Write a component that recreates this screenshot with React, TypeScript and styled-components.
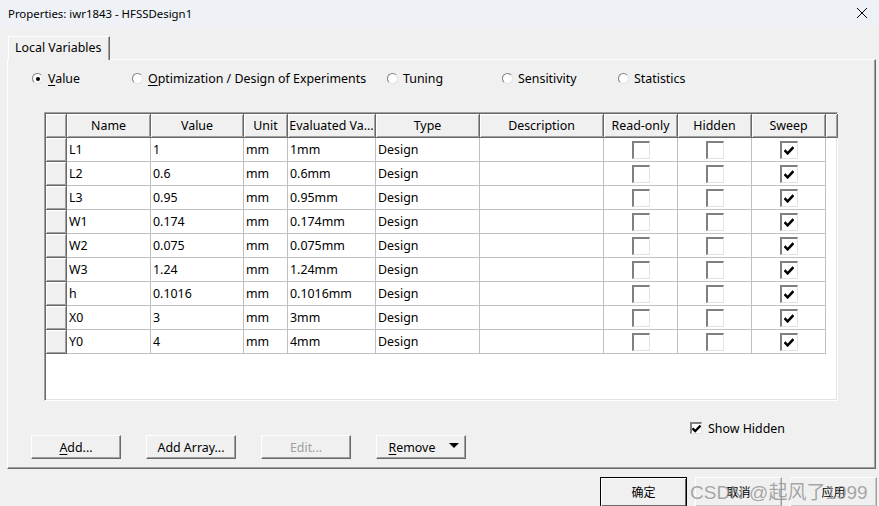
import styled, { createGlobalStyle } from 'styled-components';

const GlobalStyle = createGlobalStyle`
  html, body { margin: 0; padding: 0; background: #f0f0f0; }
  body { font-family: "Noto Sans", "Noto Sans CJK SC", sans-serif; font-size: 12.4px; color: #000; }
`;

const Window = styled.div`
  width: 879px;
  height: 506px;
  overflow: hidden;
  position: relative;
  background: #f0f0f0;
  display: flex;
  flex-direction: column;
`;

const TitleBar = styled.div`
  height: 26px;
  flex: none;
  background: #eef2f7;
  display: flex;
  align-items: center;
  justify-content: space-between;
  padding: 0 8px;
  box-sizing: border-box;
  font-size: 11.4px;
`;

const CloseIcon = styled.svg`
  width: 12px;
  height: 12px;
  margin-right: 3px;
`;

const TabStrip = styled.div`
  display: flex;
  padding: 10px 0 0 8px;
  height: 24px;
  flex: none;
  position: relative;
  z-index: 1;
`;

const Tab = styled.div`
  width: 102px;
  height: 24px;
  box-sizing: border-box;
  padding: 0 0 3px 6px;
  display: flex;
  align-items: center;
  background: #f0f0f0;
  border-top: 1px solid #fff;
  border-left: 1px solid #fff;
  border-right: 1px solid #696969;
  box-shadow: inset -1px 0 0 #a0a0a0;
`;

const Panel = styled.div`
  margin: -1px 0 0 7px;
  width: 869px;
  height: 410px;
  flex: none;
  box-sizing: border-box;
  border-top: 1px solid #fff;
  border-left: 1px solid #fff;
  border-right: 1px solid #696969;
  border-bottom: 1px solid #696969;
  box-shadow: inset -1px -1px 0 #a0a0a0;
  padding-top: 10px;
  display: flex;
  flex-direction: column;
`;

const RadioRow = styled.div`
  display: grid;
  grid-template-columns: 100px 255px 115px 116px auto;
  padding-left: 24px;
  height: 14px;
  align-items: center;
`;

const RadioItem = styled.label`
  display: flex;
  align-items: center;
  gap: 5px;
  white-space: nowrap;
`;

const RadioCircle = styled.span<{ $on?: boolean }>`
  width: 11px;
  height: 11px;
  box-sizing: border-box;
  border-radius: 50%;
  background: #fff;
  border: 1px solid;
  border-color: #808080 #e3e3e3 #e3e3e3 #808080;
  display: flex;
  align-items: center;
  justify-content: center;
  &::after {
    content: '';
    width: 4px;
    height: 4px;
    border-radius: 50%;
    background: ${({ $on }) => ($on ? '#000' : 'transparent')};
  }
`;

const Key = styled.span`
  text-decoration: underline;
  text-underline-offset: 2px;
`;

const GridBox = styled.div`
  margin: 28px 0 0 36px;
  width: 794px;
  height: 289px;
  box-sizing: border-box;
  background: #fff;
  border-top: 1px solid #a0a0a0;
  border-left: 1px solid #a0a0a0;
  border-right: 1px solid #fff;
  border-bottom: 1px solid #fff;
  box-shadow: inset 1px 1px 0 #696969, inset -1px -1px 0 #e3e3e3;
  padding: 1px;
`;

const cols = '21px 84px 93px 44px 88px 104px 124px 74px 74px 74px 12px';

const Row = styled.div`
  display: grid;
  grid-template-columns: ${cols};
  height: 24px;
`;

const HeadCell = styled.div`
  background: #f0f0f0;
  box-sizing: border-box;
  border-right: 1px solid #696969;
  border-bottom: 1px solid #696969;
  box-shadow: inset 1px 1px 0 #fff, inset -1px -1px 0 #a0a0a0;
  display: flex;
  align-items: center;
  justify-content: center;
  white-space: nowrap;
  overflow: hidden;
`;

const Cell = styled.div<{ $center?: boolean }>`
  box-sizing: border-box;
  border-right: 1px solid #c0c0c0;
  border-bottom: 1px solid #c0c0c0;
  display: flex;
  align-items: center;
  justify-content: ${({ $center }) => ($center ? 'center' : 'flex-start')};
  padding-left: ${({ $center }) => ($center ? '0' : '2px')};
  white-space: nowrap;
`;

const Check = styled.span<{ $size: number }>`
  width: ${({ $size }) => $size}px;
  height: ${({ $size }) => $size}px;
  flex: none;
  box-sizing: border-box;
  background: #fff;
  border-top: 2px solid #808080;
  border-left: 2px solid #808080;
  border-right: 1px solid #e3e3e3;
  border-bottom: 1px solid #e3e3e3;
  display: flex;
  align-items: center;
  justify-content: center;
`;

const CheckMark = styled.svg`
  width: 10px;
  height: 9px;
`;

const BottomArea = styled.div`
  display: flex;
  flex-direction: column;
`;

const ShowHiddenRow = styled.label`
  margin: 21px 0 0 682px;
  height: 12px;
  display: flex;
  align-items: center;
  gap: 6px;
`;

const ButtonRow = styled.div`
  display: flex;
  gap: 25px;
  padding-left: 23px;
  margin-top: 1px;
`;

const Button = styled.button<{ $disabled?: boolean; $menu?: boolean }>`
  width: 90px;
  height: 24px;
  padding: 0 ${({ $menu }) => ($menu ? '18px' : '0')} 0 0;
  box-sizing: border-box;
  font: inherit;
  color: ${({ $disabled }) => ($disabled ? '#a0a0a0' : '#000')};
  background: #f0f0f0;
  border: 1px solid;
  border-color: #fff #696969 #696969 #fff;
  box-shadow: inset -1px -1px 0 #a0a0a0;
  display: flex;
  align-items: center;
  justify-content: center;
  position: relative;
`;

const DropArrow = styled.span`
  position: absolute;
  right: 6px;
  top: 7px;
  width: 0;
  height: 0;
  border-left: 5px solid transparent;
  border-right: 5px solid transparent;
  border-top: 5px solid #000;
`;

const Footer = styled.div`
  display: flex;
  justify-content: flex-end;
  gap: 8px;
  padding-right: 2px;
  margin-top: 8px;
`;

const FooterButton = styled.button<{ $default?: boolean }>`
  width: 87px;
  height: 30px;
  flex: none;
  padding: 0;
  font: inherit;
  font-size: 12px;
  background: #f0f0f0;
  box-sizing: border-box;
  border: 1px solid;
  border-color: ${({ $default }) => ($default ? '#000' : '#fff #a0a0a0 #a0a0a0 #fff')};
  box-shadow: ${({ $default }) =>
    $default ? 'inset 1px 1px 0 #fff, inset -1px -1px 0 #696969' : 'inset -1px -1px 0 #c8c8c8'};
`;

const Watermark = styled.div`
  position: absolute;
  left: 690px;
  top: 477px;
  font-family: "Liberation Sans", "Noto Sans CJK SC", sans-serif;
  font-size: 19px;
  color: rgba(140, 140, 140, 0.75);
  white-space: nowrap;
  pointer-events: none;
`;

const headers = ['Name', 'Value', 'Unit', 'Evaluated Va...', 'Type', 'Description', 'Read-only', 'Hidden', 'Sweep'];

const variables = [
  ['L1', '1', '1mm'],
  ['L2', '0.6', '0.6mm'],
  ['L3', '0.95', '0.95mm'],
  ['W1', '0.174', '0.174mm'],
  ['W2', '0.075', '0.075mm'],
  ['W3', '1.24', '1.24mm'],
  ['h', '0.1016', '0.1016mm'],
  ['X0', '3', '3mm'],
  ['Y0', '4', '4mm'],
];

function CheckBox({ checked, size }: { checked?: boolean; size: number }) {
  return (
    <Check $size={size}>
      {checked && (
        <CheckMark viewBox="0 0 10 9">
          <path d="M0.5 4.2 L3.6 7.3 L9.5 1.2" fill="none" stroke="#000" strokeWidth="2.6" />
        </CheckMark>
      )}
    </Check>
  );
}

export default function App() {
  return (
    <>
      <GlobalStyle />
      <Window>
        <TitleBar>
          <span>Properties: iwr1843 - HFSSDesign1</span>
          <CloseIcon viewBox="0 0 12 12">
            <path d="M1 1 L11 11 M11 1 L1 11" stroke="#000" strokeWidth="1" />
          </CloseIcon>
        </TitleBar>

        <TabStrip>
          <Tab>Local Variables</Tab>
        </TabStrip>

        <Panel>
          <RadioRow>
            <RadioItem><RadioCircle $on /><span><Key>V</Key>alue</span></RadioItem>
            <RadioItem><RadioCircle /><span><Key>O</Key>ptimization / Design of Experiments</span></RadioItem>
            <RadioItem><RadioCircle />Tuning</RadioItem>
            <RadioItem><RadioCircle />Sensitivity</RadioItem>
            <RadioItem><RadioCircle />Statistics</RadioItem>
          </RadioRow>

          <GridBox>
            <Row>
              <HeadCell />
              {headers.map((h) => <HeadCell key={h}>{h}</HeadCell>)}
              <HeadCell />
            </Row>
            {variables.map(([name, value, evaluated]) => (
              <Row key={name}>
                <HeadCell />
                <Cell>{name}</Cell>
                <Cell>{value}</Cell>
                <Cell>mm</Cell>
                <Cell>{evaluated}</Cell>
                <Cell>Design</Cell>
                <Cell />
                <Cell $center><CheckBox size={18} /></Cell>
                <Cell $center><CheckBox size={18} /></Cell>
                <Cell $center><CheckBox size={18} checked /></Cell>
              </Row>
            ))}
          </GridBox>

          <BottomArea>
            <ShowHiddenRow>
              <CheckBox size={12} checked />
              Show Hidden
            </ShowHiddenRow>
            <ButtonRow>
              <Button><span><Key>A</Key>dd...</span></Button>
              <Button>Add Array...</Button>
              <Button $disabled>Edit...</Button>
              <Button $menu><span><Key>R</Key>emove</span><DropArrow /></Button>
            </ButtonRow>
          </BottomArea>
        </Panel>

        <Footer>
          <FooterButton $default>确定</FooterButton>
          <FooterButton>取消</FooterButton>
          <FooterButton>应用</FooterButton>
        </Footer>

        <Watermark>CSDN @起风了1999</Watermark>
      </Window>
    </>
  );
}
